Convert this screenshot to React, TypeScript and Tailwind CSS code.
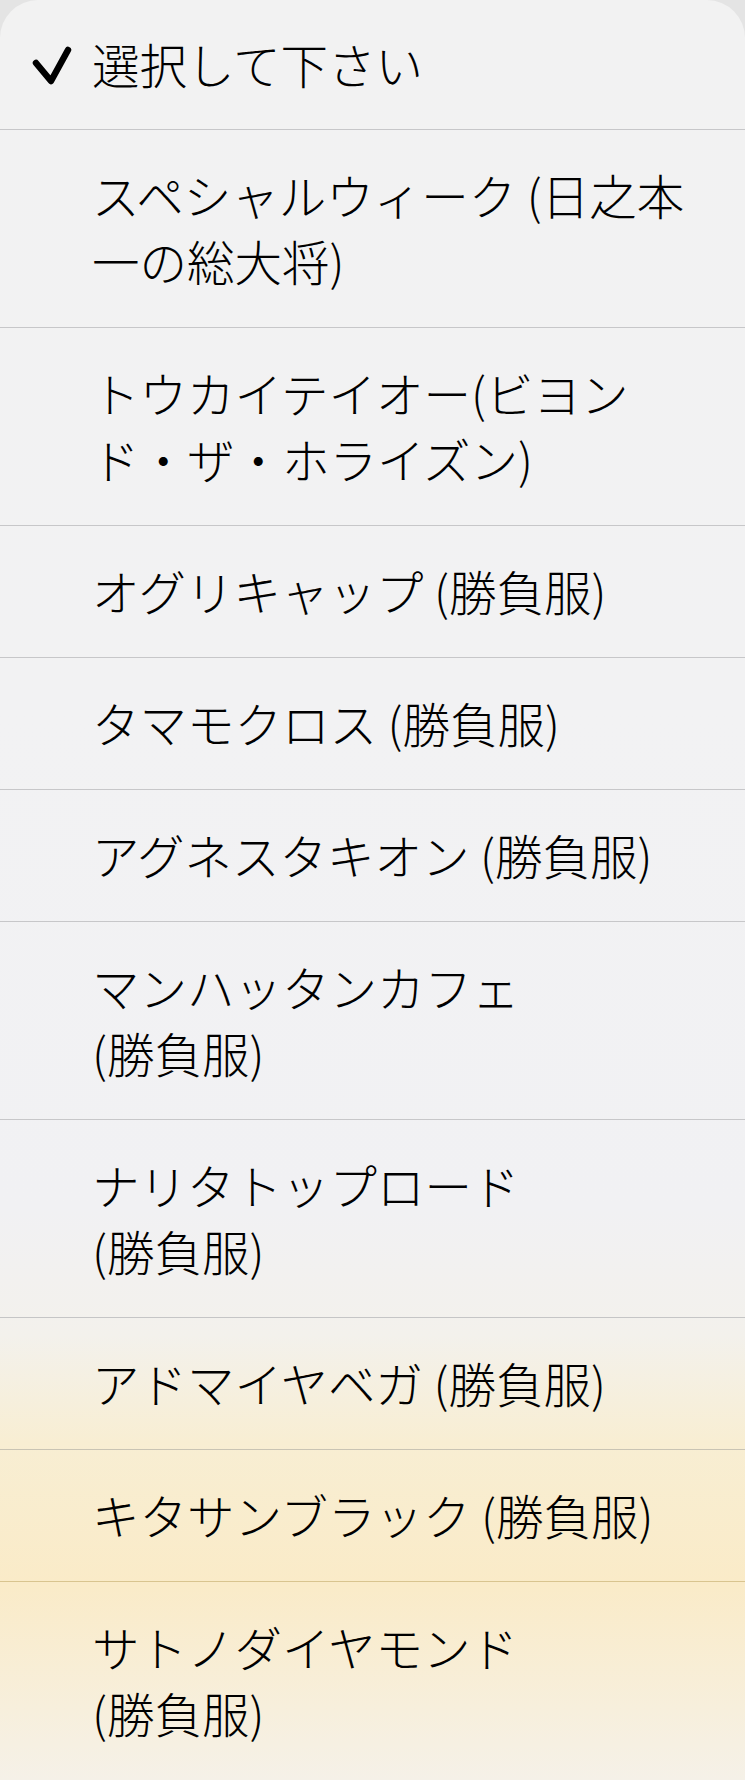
import React from 'react';

type Row = { lines: string[]; line: string };

const rows: Row[] = [
  { lines: ['スペシャルウィーク (日之本', '一の総大将)'], line: 'border-[#c7c7c9]' },
  { lines: ['トウカイテイオー(ビヨン', 'ド・ザ・ホライズン)'], line: 'border-[#c7c7c9]' },
  { lines: ['オグリキャップ (勝負服)'], line: 'border-[#c7c7c9]' },
  { lines: ['タマモクロス (勝負服)'], line: 'border-[#c7c7c9]' },
  { lines: ['アグネスタキオン (勝負服)'], line: 'border-[#c7c7c9]' },
  { lines: ['マンハッタンカフェ', '(勝負服)'], line: 'border-[#c7c7c9]' },
  { lines: ['ナリタトップロード', '(勝負服)'], line: 'border-[#c5c5c6]' },
  { lines: ['アドマイヤベガ (勝負服)'], line: 'border-[#c9c4b4]' },
  { lines: ['キタサンブラック (勝負服)'], line: 'border-[#d9c48f]' },
  { lines: ['サトノダイヤモンド', '(勝負服)'], line: 'border-transparent' },
];

function Check() {
  return (
    <svg width="92" height="66" viewBox="0 0 92 66" className="shrink-0">
      <polyline
        points="36,32 51,50 68,19"
        fill="none"
        stroke="#000"
        strokeWidth="6.5"
        strokeLinecap="round"
        strokeLinejoin="round"
      />
    </svg>
  );
}

export default function App() {
  return (
    <div className="w-[745px] h-[1780px] bg-[#e4e4e4] overflow-hidden">
      <div
        className="h-full rounded-t-[38px] overflow-hidden text-black bg-[linear-gradient(180deg,#f2f2f2_0%,#f2f2f3_40%,#f1f1f3_68%,#f3f1ec_75%,#f8eed3_81%,#faebc8_89%,#f7efdc_96%,#f5f1e8_100%)]"
        style={{ fontFamily: '"Noto Sans CJK JP", "Noto Sans", sans-serif' }}
      >
        {/* selected placeholder */}
        <div className="flex items-start pt-[31px] pb-[32px] border-b border-[#c7c7c9]">
          <Check />
          <span className="text-[47.5px] font-light leading-[66px] whitespace-nowrap">選択して下さい</span>
        </div>

        {rows.map((r, i) => (
          <div key={i} className={`flex items-start pt-[32px] pb-[33px] pl-[92px] border-b ${r.line}`}>
            <div className="flex flex-col">
              {r.lines.map((t, j) => (
                <span key={j} className="text-[47.5px] font-light leading-[66px] whitespace-nowrap">
                  {t}
                </span>
              ))}
            </div>
          </div>
        ))}
      </div>
    </div>
  );
}
